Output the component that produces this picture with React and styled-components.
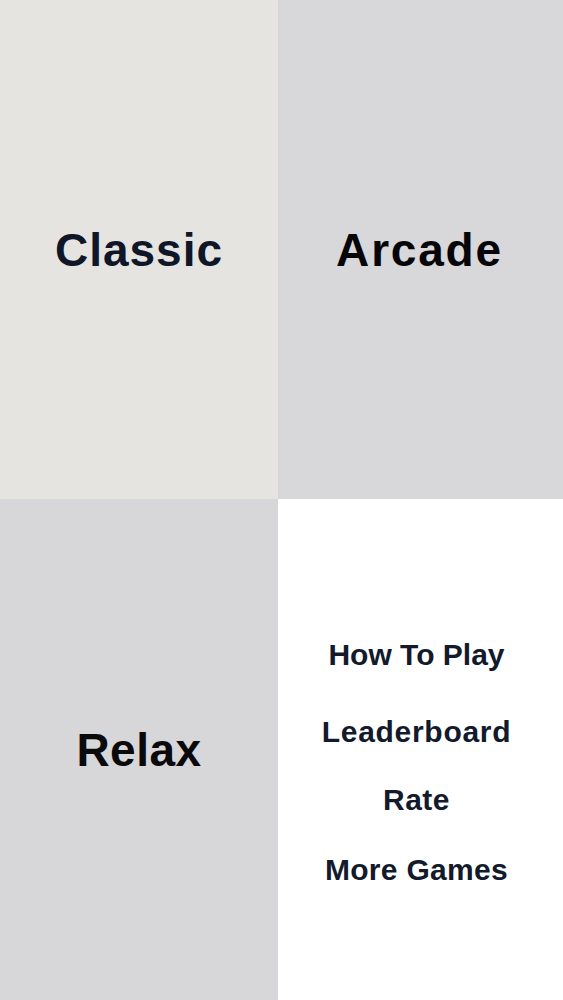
import React from "react";
import styled, { createGlobalStyle } from "styled-components";

const Global = createGlobalStyle`
  html, body { margin: 0; padding: 0; background: #ffffff; }
  body { font-family: "Liberation Sans", Arial, sans-serif; }
  * { box-sizing: border-box; }
`;

const Board = styled.div`
  display: grid;
  grid-template-columns: 278px 1fr;
  grid-template-rows: 499px 501px;
  width: 563px;
  height: 1000px;
  overflow: hidden;
`;

const ModeTile = styled.div`
  display: flex;
  align-items: center;
  justify-content: center;
  background: ${(p) => p.$bg};
  color: ${(p) => p.$color};
  font-family: "Liberation Sans", Arial, sans-serif;
  font-weight: 700;
  font-size: 46px;
  letter-spacing: ${(p) => p.$ls}px;
  line-height: 46px;
  padding-right: ${(p) => p.$shift || 0}px;
  cursor: pointer;
  user-select: none;
`;

const MenuTile = styled.div`
  display: flex;
  flex-direction: column;
  align-items: center;
  padding-top: 141px;
  padding-right: 8px;
  background: #ffffff;
`;

const MenuItem = styled.div`
  margin-top: ${(p) => p.$top}px;
  height: 30px;
  font-family: "Liberation Sans", Arial, sans-serif;
  font-weight: 700;
  font-size: 30px;
  line-height: 30px;
  letter-spacing: ${(p) => p.$ls}px;
  color: #121a2c;
  white-space: nowrap;
  cursor: pointer;
`;

const menu = [
  { label: "How To Play", top: 0, ls: 0 },
  { label: "Leaderboard", top: 47, ls: 0.7 },
  { label: "Rate", top: 38, ls: 0.5 },
  { label: "More Games", top: 40, ls: 0.3 },
];

export default function App() {
  return (
    <>
      <Global />
      <Board>
        <ModeTile $bg="#e5e4e0" $color="#0f1628" $ls={1}>Classic</ModeTile>
        <ModeTile $bg="#d8d7da" $color="#060608" $ls={1.8} $shift={2}>Arcade</ModeTile>
        <ModeTile $bg="#d7d6d8" $color="#0a0a0c" $ls={0.5}>Relax</ModeTile>
        <MenuTile>
          {menu.map((m) => (
            <MenuItem key={m.label} $top={m.top} $ls={m.ls}>
              {m.label}
            </MenuItem>
          ))}
        </MenuTile>
      </Board>
    </>
  );
}
